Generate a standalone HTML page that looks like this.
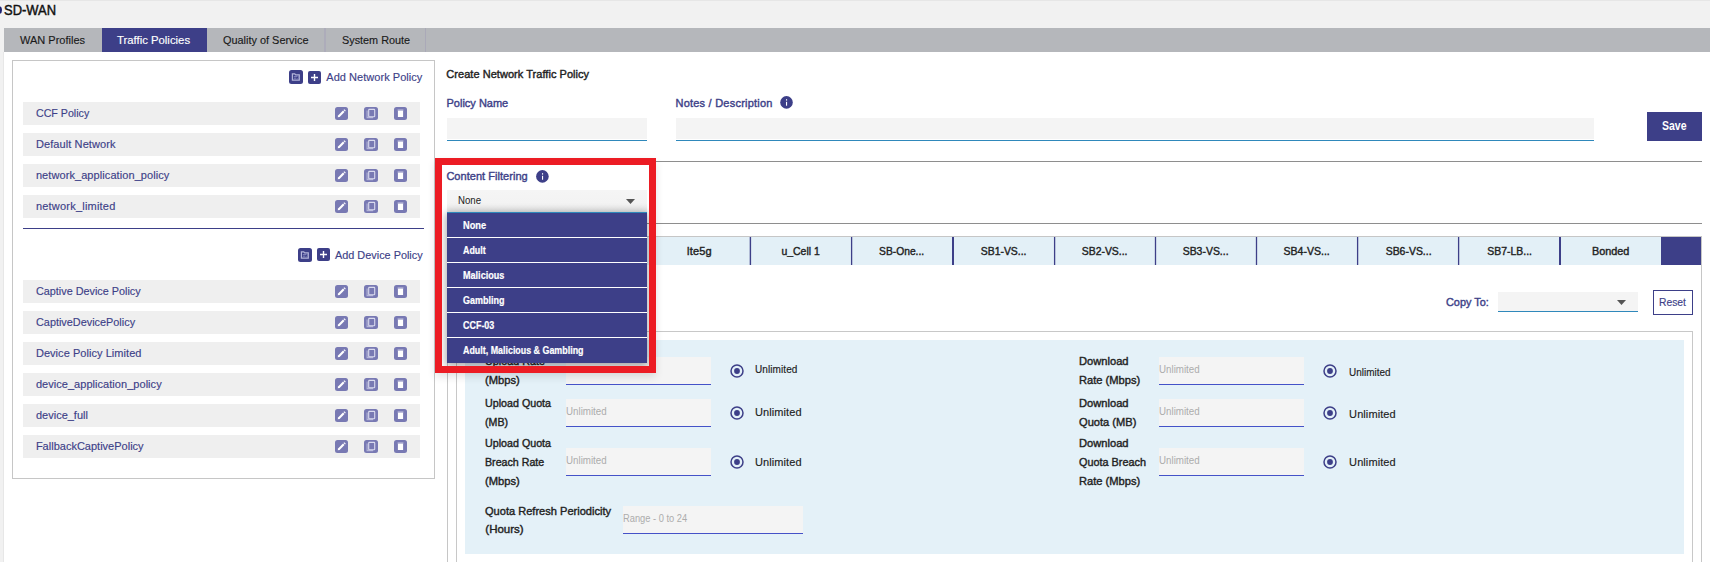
<!DOCTYPE html>
<html><head><meta charset="utf-8"><style>
html,body{margin:0;padding:0;width:1710px;height:562px;overflow:hidden;background:#fff}
body{position:relative;font-family:"Liberation Sans",sans-serif}
.t{position:absolute;white-space:nowrap}
.r{position:absolute}
svg.r{display:block}
</style></head><body>
<div class="r" style="left:0px;top:0px;width:1710px;height:562px;background:#f1f1f1"></div>
<div class="r" style="left:0px;top:0px;width:1710px;height:1px;background:#e6e6e6"></div>
<div class="r" style="left:4px;top:28px;width:1706px;height:24px;background:#b5b7bb"></div>
<div class="r" style="left:4px;top:52px;width:1706px;height:510px;background:#fff"></div>
<div class="r" style="left:3px;top:52px;width:1px;height:510px;background:#e7e7e7"></div>
<div class="r" style="left:-5px;top:6px;width:6.5px;height:8px;background:#1d2170;border-radius:50%"></div>
<div class="t" style="left:3.70px;transform:scaleX(0.9250);transform-origin:left center;top:3.00px;font-size:14px;line-height:14px;font-weight:400;color:#111;letter-spacing:0.000px;-webkit-text-stroke:0.45px #111;">SD-WAN</div>
<div class="r" style="left:102px;top:28px;width:105px;height:24px;background:#3d3f88"></div>
<div class="r" style="left:324px;top:28px;width:2px;height:24px;background:#adacba"></div>
<div class="r" style="left:425px;top:28px;width:1px;height:24px;background:#aaa9b8"></div>
<div class="t" style="left:19.50px;transform:scaleX(0.9329);transform-origin:left center;top:35.00px;font-size:11.8px;line-height:11.8px;font-weight:400;color:#1a1a1a;letter-spacing:0.000px;-webkit-text-stroke:0.15px #1a1a1a;">WAN Profiles</div>
<div class="t" style="left:117.30px;transform:scaleX(0.9605);transform-origin:left center;top:35.00px;font-size:11.8px;line-height:11.8px;font-weight:400;color:#fff;letter-spacing:0.000px;-webkit-text-stroke:0.15px #fff;">Traffic Policies</div>
<div class="t" style="left:222.50px;transform:scaleX(0.9247);transform-origin:left center;top:35.00px;font-size:11.8px;line-height:11.8px;font-weight:400;color:#1a1a1a;letter-spacing:0.000px;-webkit-text-stroke:0.15px #1a1a1a;">Quality of Service</div>
<div class="t" style="left:341.50px;transform:scaleX(0.9189);transform-origin:left center;top:35.00px;font-size:11.8px;line-height:11.8px;font-weight:400;color:#1a1a1a;letter-spacing:0.000px;-webkit-text-stroke:0.15px #1a1a1a;">System Route</div>
<div class="r" style="left:12px;top:60px;width:423px;height:419px;border:1px solid #c6c6c6;box-sizing:border-box"></div>
<svg class="r" style="left:289px;top:70px" width="14" height="14" viewBox="0 0 14 14"><rect x="0" y="0" width="14" height="14" rx="2.5" fill="#3d3f88"/><path d="M3.4 3.9h2.4l0.9 0.9h3.6v5.3H3.4z" fill="none" stroke="#b4b5da" stroke-width="1.2"/><path d="M4.8 6.6h3.4M4.8 8.2h2.6" stroke="#8d8fc4" stroke-width="0.9"/><path d="M8.6 5.8l1.2 1.6-1.2 1.6" fill="none" stroke="#8d8fc4" stroke-width="0.8"/></svg>
<svg class="r" style="left:308px;top:71px" width="13" height="13" viewBox="0 0 13 13"><rect x="0" y="0" width="13" height="13" rx="2" fill="#3d3f88"/><path d="M6.5 3v7M3 6.5h7" stroke="#fff" stroke-width="1.4"/></svg>
<div class="t" style="left:326.30px;top:72.00px;font-size:11px;line-height:11px;font-weight:400;color:#3d3f88;letter-spacing:0.041px;-webkit-text-stroke:0.15px #3d3f88;">Add Network Policy</div>
<div class="r" style="left:23px;top:102px;width:397px;height:23px;background:#efefef"></div>
<div class="t" style="left:35.90px;transform:scaleX(0.9673);transform-origin:left center;top:108.00px;font-size:11px;line-height:11px;font-weight:400;color:#3d3f88;letter-spacing:0.000px;-webkit-text-stroke:0.15px #3d3f88;">CCF Policy</div>
<svg class="r" style="left:335px;top:107px" width="13" height="13" viewBox="0 0 13 13"><rect x="0" y="0" width="13" height="13" rx="2.5" fill="#7879b3"/><path d="M2.7 10.3l0.4-1.9 4.9-4.9 1.5 1.5-4.9 4.9z" fill="#fff"/><path d="M8.5 3l0.8-0.8 1.5 1.5-0.8 0.8z" fill="#fff"/></svg>
<svg class="r" style="left:364px;top:107px" width="14" height="13" viewBox="0 0 14 13"><rect x="0" y="0" width="14" height="13" rx="2.5" fill="#7879b3"/><path d="M3.1 3.6v7h6" fill="none" stroke="#b3b4d8" stroke-width="1.1"/><rect x="4.7" y="2.4" width="6" height="7.4" rx="0.6" fill="#7879b3" stroke="#d9daee" stroke-width="1.1"/></svg>
<svg class="r" style="left:394px;top:107px" width="13" height="13" viewBox="0 0 13 13"><rect x="0" y="0" width="13" height="13" rx="2.5" fill="#7879b3"/><rect x="3.9" y="3.6" width="5.2" height="6.4" fill="#fff"/><rect x="3.6" y="2.6" width="5.8" height="0.8" fill="#dcdcee"/></svg>
<div class="r" style="left:23px;top:133px;width:397px;height:23px;background:#efefef"></div>
<div class="t" style="left:35.90px;top:139.00px;font-size:11px;line-height:11px;font-weight:400;color:#3d3f88;letter-spacing:0.100px;-webkit-text-stroke:0.15px #3d3f88;">Default Network</div>
<svg class="r" style="left:335px;top:138px" width="13" height="13" viewBox="0 0 13 13"><rect x="0" y="0" width="13" height="13" rx="2.5" fill="#7879b3"/><path d="M2.7 10.3l0.4-1.9 4.9-4.9 1.5 1.5-4.9 4.9z" fill="#fff"/><path d="M8.5 3l0.8-0.8 1.5 1.5-0.8 0.8z" fill="#fff"/></svg>
<svg class="r" style="left:364px;top:138px" width="14" height="13" viewBox="0 0 14 13"><rect x="0" y="0" width="14" height="13" rx="2.5" fill="#7879b3"/><path d="M3.1 3.6v7h6" fill="none" stroke="#b3b4d8" stroke-width="1.1"/><rect x="4.7" y="2.4" width="6" height="7.4" rx="0.6" fill="#7879b3" stroke="#d9daee" stroke-width="1.1"/></svg>
<svg class="r" style="left:394px;top:138px" width="13" height="13" viewBox="0 0 13 13"><rect x="0" y="0" width="13" height="13" rx="2.5" fill="#7879b3"/><rect x="3.9" y="3.6" width="5.2" height="6.4" fill="#fff"/><rect x="3.6" y="2.6" width="5.8" height="0.8" fill="#dcdcee"/></svg>
<div class="r" style="left:23px;top:164px;width:397px;height:23px;background:#efefef"></div>
<div class="t" style="left:35.90px;top:170.00px;font-size:11px;line-height:11px;font-weight:400;color:#3d3f88;letter-spacing:0.080px;-webkit-text-stroke:0.15px #3d3f88;">network_application_policy</div>
<svg class="r" style="left:335px;top:169px" width="13" height="13" viewBox="0 0 13 13"><rect x="0" y="0" width="13" height="13" rx="2.5" fill="#7879b3"/><path d="M2.7 10.3l0.4-1.9 4.9-4.9 1.5 1.5-4.9 4.9z" fill="#fff"/><path d="M8.5 3l0.8-0.8 1.5 1.5-0.8 0.8z" fill="#fff"/></svg>
<svg class="r" style="left:364px;top:169px" width="14" height="13" viewBox="0 0 14 13"><rect x="0" y="0" width="14" height="13" rx="2.5" fill="#7879b3"/><path d="M3.1 3.6v7h6" fill="none" stroke="#b3b4d8" stroke-width="1.1"/><rect x="4.7" y="2.4" width="6" height="7.4" rx="0.6" fill="#7879b3" stroke="#d9daee" stroke-width="1.1"/></svg>
<svg class="r" style="left:394px;top:169px" width="13" height="13" viewBox="0 0 13 13"><rect x="0" y="0" width="13" height="13" rx="2.5" fill="#7879b3"/><rect x="3.9" y="3.6" width="5.2" height="6.4" fill="#fff"/><rect x="3.6" y="2.6" width="5.8" height="0.8" fill="#dcdcee"/></svg>
<div class="r" style="left:23px;top:195px;width:397px;height:23px;background:#efefef"></div>
<div class="t" style="left:35.90px;top:201.00px;font-size:11px;line-height:11px;font-weight:400;color:#3d3f88;letter-spacing:0.214px;-webkit-text-stroke:0.15px #3d3f88;">network_limited</div>
<svg class="r" style="left:335px;top:200px" width="13" height="13" viewBox="0 0 13 13"><rect x="0" y="0" width="13" height="13" rx="2.5" fill="#7879b3"/><path d="M2.7 10.3l0.4-1.9 4.9-4.9 1.5 1.5-4.9 4.9z" fill="#fff"/><path d="M8.5 3l0.8-0.8 1.5 1.5-0.8 0.8z" fill="#fff"/></svg>
<svg class="r" style="left:364px;top:200px" width="14" height="13" viewBox="0 0 14 13"><rect x="0" y="0" width="14" height="13" rx="2.5" fill="#7879b3"/><path d="M3.1 3.6v7h6" fill="none" stroke="#b3b4d8" stroke-width="1.1"/><rect x="4.7" y="2.4" width="6" height="7.4" rx="0.6" fill="#7879b3" stroke="#d9daee" stroke-width="1.1"/></svg>
<svg class="r" style="left:394px;top:200px" width="13" height="13" viewBox="0 0 13 13"><rect x="0" y="0" width="13" height="13" rx="2.5" fill="#7879b3"/><rect x="3.9" y="3.6" width="5.2" height="6.4" fill="#fff"/><rect x="3.6" y="2.6" width="5.8" height="0.8" fill="#dcdcee"/></svg>
<div class="r" style="left:23px;top:228px;width:401px;height:1px;background:#3d3f88"></div>
<svg class="r" style="left:298px;top:248px" width="14" height="14" viewBox="0 0 14 14"><rect x="0" y="0" width="14" height="14" rx="2.5" fill="#3d3f88"/><path d="M3.4 3.9h2.4l0.9 0.9h3.6v5.3H3.4z" fill="none" stroke="#b4b5da" stroke-width="1.2"/><path d="M4.8 6.6h3.4M4.8 8.2h2.6" stroke="#8d8fc4" stroke-width="0.9"/><path d="M8.6 5.8l1.2 1.6-1.2 1.6" fill="none" stroke="#8d8fc4" stroke-width="0.8"/></svg>
<svg class="r" style="left:317px;top:248px" width="13" height="13" viewBox="0 0 13 13"><rect x="0" y="0" width="13" height="13" rx="2" fill="#3d3f88"/><path d="M6.5 3v7M3 6.5h7" stroke="#fff" stroke-width="1.4"/></svg>
<div class="t" style="left:334.90px;transform:scaleX(0.9888);transform-origin:left center;top:250.00px;font-size:11px;line-height:11px;font-weight:400;color:#3d3f88;letter-spacing:0.000px;-webkit-text-stroke:0.15px #3d3f88;">Add Device Policy</div>
<div class="r" style="left:23px;top:280px;width:397px;height:23px;background:#efefef"></div>
<div class="t" style="left:35.90px;transform:scaleX(0.9841);transform-origin:left center;top:286.00px;font-size:11px;line-height:11px;font-weight:400;color:#3d3f88;letter-spacing:0.000px;-webkit-text-stroke:0.15px #3d3f88;">Captive Device Policy</div>
<svg class="r" style="left:335px;top:285px" width="13" height="13" viewBox="0 0 13 13"><rect x="0" y="0" width="13" height="13" rx="2.5" fill="#7879b3"/><path d="M2.7 10.3l0.4-1.9 4.9-4.9 1.5 1.5-4.9 4.9z" fill="#fff"/><path d="M8.5 3l0.8-0.8 1.5 1.5-0.8 0.8z" fill="#fff"/></svg>
<svg class="r" style="left:364px;top:285px" width="14" height="13" viewBox="0 0 14 13"><rect x="0" y="0" width="14" height="13" rx="2.5" fill="#7879b3"/><path d="M3.1 3.6v7h6" fill="none" stroke="#b3b4d8" stroke-width="1.1"/><rect x="4.7" y="2.4" width="6" height="7.4" rx="0.6" fill="#7879b3" stroke="#d9daee" stroke-width="1.1"/></svg>
<svg class="r" style="left:394px;top:285px" width="13" height="13" viewBox="0 0 13 13"><rect x="0" y="0" width="13" height="13" rx="2.5" fill="#7879b3"/><rect x="3.9" y="3.6" width="5.2" height="6.4" fill="#fff"/><rect x="3.6" y="2.6" width="5.8" height="0.8" fill="#dcdcee"/></svg>
<div class="r" style="left:23px;top:311px;width:397px;height:23px;background:#efefef"></div>
<div class="t" style="left:35.90px;transform:scaleX(0.9881);transform-origin:left center;top:317.00px;font-size:11px;line-height:11px;font-weight:400;color:#3d3f88;letter-spacing:0.000px;-webkit-text-stroke:0.15px #3d3f88;">CaptiveDevicePolicy</div>
<svg class="r" style="left:335px;top:316px" width="13" height="13" viewBox="0 0 13 13"><rect x="0" y="0" width="13" height="13" rx="2.5" fill="#7879b3"/><path d="M2.7 10.3l0.4-1.9 4.9-4.9 1.5 1.5-4.9 4.9z" fill="#fff"/><path d="M8.5 3l0.8-0.8 1.5 1.5-0.8 0.8z" fill="#fff"/></svg>
<svg class="r" style="left:364px;top:316px" width="14" height="13" viewBox="0 0 14 13"><rect x="0" y="0" width="14" height="13" rx="2.5" fill="#7879b3"/><path d="M3.1 3.6v7h6" fill="none" stroke="#b3b4d8" stroke-width="1.1"/><rect x="4.7" y="2.4" width="6" height="7.4" rx="0.6" fill="#7879b3" stroke="#d9daee" stroke-width="1.1"/></svg>
<svg class="r" style="left:394px;top:316px" width="13" height="13" viewBox="0 0 13 13"><rect x="0" y="0" width="13" height="13" rx="2.5" fill="#7879b3"/><rect x="3.9" y="3.6" width="5.2" height="6.4" fill="#fff"/><rect x="3.6" y="2.6" width="5.8" height="0.8" fill="#dcdcee"/></svg>
<div class="r" style="left:23px;top:342px;width:397px;height:23px;background:#efefef"></div>
<div class="t" style="left:35.90px;top:348.00px;font-size:11px;line-height:11px;font-weight:400;color:#3d3f88;letter-spacing:0.050px;-webkit-text-stroke:0.15px #3d3f88;">Device Policy Limited</div>
<svg class="r" style="left:335px;top:347px" width="13" height="13" viewBox="0 0 13 13"><rect x="0" y="0" width="13" height="13" rx="2.5" fill="#7879b3"/><path d="M2.7 10.3l0.4-1.9 4.9-4.9 1.5 1.5-4.9 4.9z" fill="#fff"/><path d="M8.5 3l0.8-0.8 1.5 1.5-0.8 0.8z" fill="#fff"/></svg>
<svg class="r" style="left:364px;top:347px" width="14" height="13" viewBox="0 0 14 13"><rect x="0" y="0" width="14" height="13" rx="2.5" fill="#7879b3"/><path d="M3.1 3.6v7h6" fill="none" stroke="#b3b4d8" stroke-width="1.1"/><rect x="4.7" y="2.4" width="6" height="7.4" rx="0.6" fill="#7879b3" stroke="#d9daee" stroke-width="1.1"/></svg>
<svg class="r" style="left:394px;top:347px" width="13" height="13" viewBox="0 0 13 13"><rect x="0" y="0" width="13" height="13" rx="2.5" fill="#7879b3"/><rect x="3.9" y="3.6" width="5.2" height="6.4" fill="#fff"/><rect x="3.6" y="2.6" width="5.8" height="0.8" fill="#dcdcee"/></svg>
<div class="r" style="left:23px;top:373px;width:397px;height:23px;background:#efefef"></div>
<div class="t" style="left:35.90px;top:379.00px;font-size:11px;line-height:11px;font-weight:400;color:#3d3f88;letter-spacing:0.042px;-webkit-text-stroke:0.15px #3d3f88;">device_application_policy</div>
<svg class="r" style="left:335px;top:378px" width="13" height="13" viewBox="0 0 13 13"><rect x="0" y="0" width="13" height="13" rx="2.5" fill="#7879b3"/><path d="M2.7 10.3l0.4-1.9 4.9-4.9 1.5 1.5-4.9 4.9z" fill="#fff"/><path d="M8.5 3l0.8-0.8 1.5 1.5-0.8 0.8z" fill="#fff"/></svg>
<svg class="r" style="left:364px;top:378px" width="14" height="13" viewBox="0 0 14 13"><rect x="0" y="0" width="14" height="13" rx="2.5" fill="#7879b3"/><path d="M3.1 3.6v7h6" fill="none" stroke="#b3b4d8" stroke-width="1.1"/><rect x="4.7" y="2.4" width="6" height="7.4" rx="0.6" fill="#7879b3" stroke="#d9daee" stroke-width="1.1"/></svg>
<svg class="r" style="left:394px;top:378px" width="13" height="13" viewBox="0 0 13 13"><rect x="0" y="0" width="13" height="13" rx="2.5" fill="#7879b3"/><rect x="3.9" y="3.6" width="5.2" height="6.4" fill="#fff"/><rect x="3.6" y="2.6" width="5.8" height="0.8" fill="#dcdcee"/></svg>
<div class="r" style="left:23px;top:404px;width:397px;height:23px;background:#efefef"></div>
<div class="t" style="left:35.90px;transform:scaleX(0.9981);transform-origin:left center;top:410.00px;font-size:11px;line-height:11px;font-weight:400;color:#3d3f88;letter-spacing:0.000px;-webkit-text-stroke:0.15px #3d3f88;">device_full</div>
<svg class="r" style="left:335px;top:409px" width="13" height="13" viewBox="0 0 13 13"><rect x="0" y="0" width="13" height="13" rx="2.5" fill="#7879b3"/><path d="M2.7 10.3l0.4-1.9 4.9-4.9 1.5 1.5-4.9 4.9z" fill="#fff"/><path d="M8.5 3l0.8-0.8 1.5 1.5-0.8 0.8z" fill="#fff"/></svg>
<svg class="r" style="left:364px;top:409px" width="14" height="13" viewBox="0 0 14 13"><rect x="0" y="0" width="14" height="13" rx="2.5" fill="#7879b3"/><path d="M3.1 3.6v7h6" fill="none" stroke="#b3b4d8" stroke-width="1.1"/><rect x="4.7" y="2.4" width="6" height="7.4" rx="0.6" fill="#7879b3" stroke="#d9daee" stroke-width="1.1"/></svg>
<svg class="r" style="left:394px;top:409px" width="13" height="13" viewBox="0 0 13 13"><rect x="0" y="0" width="13" height="13" rx="2.5" fill="#7879b3"/><rect x="3.9" y="3.6" width="5.2" height="6.4" fill="#fff"/><rect x="3.6" y="2.6" width="5.8" height="0.8" fill="#dcdcee"/></svg>
<div class="r" style="left:23px;top:435px;width:397px;height:23px;background:#efefef"></div>
<div class="t" style="left:35.90px;top:441.00px;font-size:11px;line-height:11px;font-weight:400;color:#3d3f88;letter-spacing:0.005px;-webkit-text-stroke:0.15px #3d3f88;">FallbackCaptivePolicy</div>
<svg class="r" style="left:335px;top:440px" width="13" height="13" viewBox="0 0 13 13"><rect x="0" y="0" width="13" height="13" rx="2.5" fill="#7879b3"/><path d="M2.7 10.3l0.4-1.9 4.9-4.9 1.5 1.5-4.9 4.9z" fill="#fff"/><path d="M8.5 3l0.8-0.8 1.5 1.5-0.8 0.8z" fill="#fff"/></svg>
<svg class="r" style="left:364px;top:440px" width="14" height="13" viewBox="0 0 14 13"><rect x="0" y="0" width="14" height="13" rx="2.5" fill="#7879b3"/><path d="M3.1 3.6v7h6" fill="none" stroke="#b3b4d8" stroke-width="1.1"/><rect x="4.7" y="2.4" width="6" height="7.4" rx="0.6" fill="#7879b3" stroke="#d9daee" stroke-width="1.1"/></svg>
<svg class="r" style="left:394px;top:440px" width="13" height="13" viewBox="0 0 13 13"><rect x="0" y="0" width="13" height="13" rx="2.5" fill="#7879b3"/><rect x="3.9" y="3.6" width="5.2" height="6.4" fill="#fff"/><rect x="3.6" y="2.6" width="5.8" height="0.8" fill="#dcdcee"/></svg>
<div class="t" style="left:446.30px;top:69.00px;font-size:11px;line-height:11px;font-weight:400;color:#222;letter-spacing:0.043px;-webkit-text-stroke:0.4px #222;">Create Network Traffic Policy</div>
<div class="t" style="left:446.50px;top:98.00px;font-size:11px;line-height:11px;font-weight:400;color:#3d3f88;letter-spacing:0.000px;-webkit-text-stroke:0.4px #3d3f88;">Policy Name</div>
<div class="r" style="left:447px;top:118px;width:200px;height:21px;background:#f4f4f4"></div>
<div class="r" style="left:447px;top:140px;width:200px;height:1px;background:#2f88bb"></div>
<div class="t" style="left:675.50px;top:98.00px;font-size:11px;line-height:11px;font-weight:400;color:#3d3f88;letter-spacing:0.222px;-webkit-text-stroke:0.4px #3d3f88;">Notes / Description</div>
<svg class="r" style="left:779px;top:95px" width="15" height="15" viewBox="0 0 15 15"><circle cx="7.5" cy="7.400000000000006" r="6.3" fill="#3d3f88"/><rect x="7" y="6.800000000000006" width="1.1" height="3.9" fill="#fff"/><rect x="7" y="4.2000000000000055" width="1.1" height="1.4" fill="#fff"/></svg>
<div class="r" style="left:676px;top:118px;width:918px;height:21px;background:#f4f4f4"></div>
<div class="r" style="left:676px;top:140px;width:918px;height:1px;background:#2f88bb"></div>
<div class="r" style="left:1647px;top:112px;width:55px;height:29px;background:#3d3f88"></div>
<div class="t" style="left:1661.90px;transform:scaleX(0.8750);transform-origin:left center;top:120.00px;font-size:12px;line-height:12px;font-weight:700;color:#fff;letter-spacing:0.000px;">Save</div>
<div class="r" style="left:447px;top:161px;width:1255px;height:1px;background:#8e8e8e"></div>
<div class="r" style="left:447px;top:223px;width:1255px;height:1px;background:#8e8e8e"></div>
<div class="r" style="left:447px;top:236px;width:1255px;height:400px;border:1px solid #c6c6c6;box-sizing:border-box"></div>
<div class="r" style="left:448px;top:237px;width:1253px;height:28px;background:#e3f0f7"></div>
<div class="t" style="left:648.75px;width:101.25px;text-align:center;text-indent:0.225px;top:246.00px;font-size:11px;line-height:11px;font-weight:400;color:#222;letter-spacing:0.225px;-webkit-text-stroke:0.4px #222;">lte5g</div>
<div class="t" style="left:750.00px;width:101.25px;text-align:center;text-indent:0.000px;transform:scaleX(0.9500);transform-origin:center center;top:246.00px;font-size:11px;line-height:11px;font-weight:400;color:#222;letter-spacing:0.000px;-webkit-text-stroke:0.4px #222;">u_Cell 1</div>
<div class="t" style="left:851.25px;width:101.25px;text-align:center;text-indent:0.000px;transform:scaleX(0.9333);transform-origin:center center;top:246.00px;font-size:11px;line-height:11px;font-weight:400;color:#222;letter-spacing:0.000px;-webkit-text-stroke:0.4px #222;">SB-One...</div>
<div class="t" style="left:952.50px;width:101.25px;text-align:center;text-indent:0.000px;transform:scaleX(0.9479);transform-origin:center center;top:246.00px;font-size:11px;line-height:11px;font-weight:400;color:#222;letter-spacing:0.000px;-webkit-text-stroke:0.4px #222;">SB1-VS...</div>
<div class="t" style="left:1053.75px;width:101.25px;text-align:center;text-indent:0.000px;transform:scaleX(0.9479);transform-origin:center center;top:246.00px;font-size:11px;line-height:11px;font-weight:400;color:#222;letter-spacing:0.000px;-webkit-text-stroke:0.4px #222;">SB2-VS...</div>
<div class="t" style="left:1155.00px;width:101.25px;text-align:center;text-indent:0.000px;transform:scaleX(0.9500);transform-origin:center center;top:246.00px;font-size:11px;line-height:11px;font-weight:400;color:#222;letter-spacing:0.000px;-webkit-text-stroke:0.4px #222;">SB3-VS...</div>
<div class="t" style="left:1256.25px;width:101.25px;text-align:center;text-indent:0.000px;transform:scaleX(0.9583);transform-origin:center center;top:246.00px;font-size:11px;line-height:11px;font-weight:400;color:#222;letter-spacing:0.000px;-webkit-text-stroke:0.4px #222;">SB4-VS...</div>
<div class="t" style="left:1357.50px;width:101.25px;text-align:center;text-indent:0.000px;transform:scaleX(0.9500);transform-origin:center center;top:246.00px;font-size:11px;line-height:11px;font-weight:400;color:#222;letter-spacing:0.000px;-webkit-text-stroke:0.4px #222;">SB6-VS...</div>
<div class="t" style="left:1458.75px;width:101.25px;text-align:center;text-indent:0.000px;transform:scaleX(0.9489);transform-origin:center center;top:246.00px;font-size:11px;line-height:11px;font-weight:400;color:#222;letter-spacing:0.000px;-webkit-text-stroke:0.4px #222;">SB7-LB...</div>
<div class="t" style="left:1560.00px;width:101.25px;text-align:center;text-indent:0.000px;transform:scaleX(0.9868);transform-origin:center center;top:246.00px;font-size:11px;line-height:11px;font-weight:400;color:#222;letter-spacing:0.000px;-webkit-text-stroke:0.4px #222;">Bonded</div>
<svg class="r" style="left:448px;top:237px" width="1253" height="28" viewBox="0 0 1253 28"><rect x="301.70" y="0" width="1.4" height="28" fill="#3d3f88"/><rect x="402.95" y="0" width="1.3" height="28" fill="#3d3f88"/><rect x="504.00" y="0" width="2" height="28" fill="#3d3f88"/><rect x="605.95" y="0" width="1.3" height="28" fill="#3d3f88"/><rect x="706.85" y="0" width="1.3" height="28" fill="#3d3f88"/><rect x="807.85" y="0" width="1.3" height="28" fill="#3d3f88"/><rect x="908.95" y="0" width="1.3" height="28" fill="#3d3f88"/><rect x="1009.95" y="0" width="1.3" height="28" fill="#3d3f88"/><rect x="1111.00" y="0" width="2" height="28" fill="#3d3f88"/><rect x="1213" y="0" width="40" height="28" fill="#3d3f88"/></svg>
<div class="t" style="left:1445.50px;transform:scaleX(0.9907);transform-origin:left center;top:297.00px;font-size:11px;line-height:11px;font-weight:400;color:#3d3f88;letter-spacing:0.000px;-webkit-text-stroke:0.4px #3d3f88;">Copy To:</div>
<div class="r" style="left:1498px;top:292px;width:140px;height:19px;background:#f4f4f4"></div>
<div class="r" style="left:1498px;top:311px;width:140px;height:1px;background:#2f88bb"></div>
<svg class="r" style="left:1617px;top:300px" width="9" height="5" viewBox="0 0 9 5"><path d="M0 0h9L4.5 5z" fill="#555"/></svg>
<div class="r" style="left:1653px;top:290px;width:40px;height:25px;border:1px solid #3d3f88;box-sizing:border-box;background:#fff"></div>
<div class="t" style="left:1659.00px;transform:scaleX(0.9379);transform-origin:left center;top:297.00px;font-size:11px;line-height:11px;font-weight:400;color:#3d3f88;letter-spacing:0.000px;-webkit-text-stroke:0.15px #3d3f88;">Reset</div>
<div class="r" style="left:456px;top:331px;width:1237px;height:300px;border:1px solid #c8c8c8;box-sizing:border-box"></div>
<div class="r" style="left:465px;top:340px;width:1219px;height:214px;background:#e4f1f8"></div>
<div class="t" style="left:485.30px;transform:scaleX(0.9375);transform-origin:left center;top:356.00px;font-size:11.5px;line-height:11.5px;font-weight:400;color:#222;letter-spacing:0.000px;-webkit-text-stroke:0.4px #222;">Upload Rate</div>
<div class="t" style="left:485.30px;transform:scaleX(0.9722);transform-origin:left center;top:375.00px;font-size:11.5px;line-height:11.5px;font-weight:400;color:#222;letter-spacing:0.000px;-webkit-text-stroke:0.4px #222;">(Mbps)</div>
<div class="r" style="left:566px;top:357px;width:145px;height:27px;background:#f4f4f4"></div>
<div class="r" style="left:566px;top:384px;width:145px;height:1px;background:#4552c8"></div>
<svg class="r" style="left:730px;top:364px" width="14" height="14" viewBox="0 0 14 14"><circle cx="7" cy="7" r="6" fill="none" stroke="#3d3f88" stroke-width="1.5"/><circle cx="7" cy="7" r="2.9" fill="#3d3f88"/></svg>
<div class="t" style="left:755.00px;top:365.00px;font-size:10px;line-height:10px;font-weight:400;color:#222;letter-spacing:0.088px;-webkit-text-stroke:0.15px #222;">Unlimited</div>
<div class="t" style="left:485.30px;transform:scaleX(0.9306);transform-origin:left center;top:398.00px;font-size:11.5px;line-height:11.5px;font-weight:400;color:#222;letter-spacing:0.000px;-webkit-text-stroke:0.4px #222;">Upload Quota</div>
<div class="t" style="left:485.30px;transform:scaleX(0.9240);transform-origin:left center;top:417.00px;font-size:11.5px;line-height:11.5px;font-weight:400;color:#222;letter-spacing:0.000px;-webkit-text-stroke:0.4px #222;">(MB)</div>
<div class="r" style="left:566px;top:399px;width:145px;height:27px;background:#f4f4f4"></div>
<div class="r" style="left:566px;top:426px;width:145px;height:1px;background:#4552c8"></div>
<div class="t" style="left:565.50px;transform:scaleX(0.9756);transform-origin:left center;top:407.00px;font-size:10px;line-height:10px;font-weight:400;color:#acacac;letter-spacing:0.000px;">Unlimited</div>
<svg class="r" style="left:730px;top:406px" width="14" height="14" viewBox="0 0 14 14"><circle cx="7" cy="7" r="6" fill="none" stroke="#3d3f88" stroke-width="1.5"/><circle cx="7" cy="7" r="2.9" fill="#3d3f88"/></svg>
<div class="t" style="left:755.00px;top:407.00px;font-size:11px;line-height:11px;font-weight:400;color:#222;letter-spacing:0.088px;-webkit-text-stroke:0.15px #222;">Unlimited</div>
<div class="t" style="left:485.30px;transform:scaleX(0.9306);transform-origin:left center;top:438.00px;font-size:11.5px;line-height:11.5px;font-weight:400;color:#222;letter-spacing:0.000px;-webkit-text-stroke:0.4px #222;">Upload Quota</div>
<div class="t" style="left:485.30px;transform:scaleX(0.9266);transform-origin:left center;top:457.00px;font-size:11.5px;line-height:11.5px;font-weight:400;color:#222;letter-spacing:0.000px;-webkit-text-stroke:0.4px #222;">Breach Rate</div>
<div class="t" style="left:485.30px;transform:scaleX(0.9722);transform-origin:left center;top:476.00px;font-size:11.5px;line-height:11.5px;font-weight:400;color:#222;letter-spacing:0.000px;-webkit-text-stroke:0.4px #222;">(Mbps)</div>
<div class="r" style="left:566px;top:448px;width:145px;height:27px;background:#f4f4f4"></div>
<div class="r" style="left:566px;top:475px;width:145px;height:1px;background:#4552c8"></div>
<div class="t" style="left:565.50px;transform:scaleX(0.9756);transform-origin:left center;top:456.00px;font-size:10px;line-height:10px;font-weight:400;color:#acacac;letter-spacing:0.000px;">Unlimited</div>
<svg class="r" style="left:730px;top:455px" width="14" height="14" viewBox="0 0 14 14"><circle cx="7" cy="7" r="6" fill="none" stroke="#3d3f88" stroke-width="1.5"/><circle cx="7" cy="7" r="2.9" fill="#3d3f88"/></svg>
<div class="t" style="left:755.00px;top:457.00px;font-size:11px;line-height:11px;font-weight:400;color:#222;letter-spacing:0.088px;-webkit-text-stroke:0.15px #222;">Unlimited</div>
<div class="t" style="left:485.30px;transform:scaleX(0.9618);transform-origin:left center;top:506.00px;font-size:11.5px;line-height:11.5px;font-weight:400;color:#222;letter-spacing:0.000px;-webkit-text-stroke:0.4px #222;">Quota Refresh Periodicity</div>
<div class="t" style="left:485.30px;top:524.00px;font-size:11.5px;line-height:11.5px;font-weight:400;color:#222;letter-spacing:0.000px;-webkit-text-stroke:0.4px #222;">(Hours)</div>
<div class="r" style="left:623px;top:506px;width:180px;height:27px;background:#f4f4f4"></div>
<div class="r" style="left:623px;top:533px;width:180px;height:1px;background:#4552c8"></div>
<div class="t" style="left:622.50px;transform:scaleX(0.9309);transform-origin:left center;top:514.00px;font-size:10px;line-height:10px;font-weight:400;color:#acacac;letter-spacing:0.000px;">Range - 0 to 24</div>
<div class="t" style="left:1078.80px;transform:scaleX(0.9686);transform-origin:left center;top:356.00px;font-size:11.5px;line-height:11.5px;font-weight:400;color:#222;letter-spacing:0.000px;-webkit-text-stroke:0.4px #222;">Download</div>
<div class="t" style="left:1078.80px;transform:scaleX(0.9683);transform-origin:left center;top:375.00px;font-size:11.5px;line-height:11.5px;font-weight:400;color:#222;letter-spacing:0.000px;-webkit-text-stroke:0.4px #222;">Rate (Mbps)</div>
<div class="r" style="left:1159px;top:357px;width:145px;height:27px;background:#f4f4f4"></div>
<div class="r" style="left:1159px;top:384px;width:145px;height:1px;background:#4552c8"></div>
<div class="t" style="left:1158.50px;transform:scaleX(0.9756);transform-origin:left center;top:365.00px;font-size:10px;line-height:10px;font-weight:400;color:#acacac;letter-spacing:0.000px;">Unlimited</div>
<svg class="r" style="left:1322.5px;top:364px" width="14" height="14" viewBox="0 0 14 14"><circle cx="7" cy="7" r="6" fill="none" stroke="#3d3f88" stroke-width="1.5"/><circle cx="7" cy="7" r="2.9" fill="#3d3f88"/></svg>
<div class="t" style="left:1349.10px;transform:scaleX(0.9951);transform-origin:left center;top:368.00px;font-size:10px;line-height:10px;font-weight:400;color:#222;letter-spacing:0.000px;-webkit-text-stroke:0.15px #222;">Unlimited</div>
<div class="t" style="left:1078.80px;transform:scaleX(0.9686);transform-origin:left center;top:398.00px;font-size:11.5px;line-height:11.5px;font-weight:400;color:#222;letter-spacing:0.000px;-webkit-text-stroke:0.4px #222;">Download</div>
<div class="t" style="left:1078.80px;transform:scaleX(0.9661);transform-origin:left center;top:417.00px;font-size:11.5px;line-height:11.5px;font-weight:400;color:#222;letter-spacing:0.000px;-webkit-text-stroke:0.4px #222;">Quota (MB)</div>
<div class="r" style="left:1159px;top:399px;width:145px;height:27px;background:#f4f4f4"></div>
<div class="r" style="left:1159px;top:426px;width:145px;height:1px;background:#4552c8"></div>
<div class="t" style="left:1158.50px;transform:scaleX(0.9756);transform-origin:left center;top:407.00px;font-size:10px;line-height:10px;font-weight:400;color:#acacac;letter-spacing:0.000px;">Unlimited</div>
<svg class="r" style="left:1322.5px;top:406px" width="14" height="14" viewBox="0 0 14 14"><circle cx="7" cy="7" r="6" fill="none" stroke="#3d3f88" stroke-width="1.5"/><circle cx="7" cy="7" r="2.9" fill="#3d3f88"/></svg>
<div class="t" style="left:1349.10px;top:409.00px;font-size:11px;line-height:11px;font-weight:400;color:#222;letter-spacing:0.088px;-webkit-text-stroke:0.15px #222;">Unlimited</div>
<div class="t" style="left:1078.80px;transform:scaleX(0.9686);transform-origin:left center;top:438.00px;font-size:11.5px;line-height:11.5px;font-weight:400;color:#222;letter-spacing:0.000px;-webkit-text-stroke:0.4px #222;">Download</div>
<div class="t" style="left:1078.80px;transform:scaleX(0.9437);transform-origin:left center;top:457.00px;font-size:11.5px;line-height:11.5px;font-weight:400;color:#222;letter-spacing:0.000px;-webkit-text-stroke:0.4px #222;">Quota Breach</div>
<div class="t" style="left:1078.80px;transform:scaleX(0.9683);transform-origin:left center;top:476.00px;font-size:11.5px;line-height:11.5px;font-weight:400;color:#222;letter-spacing:0.000px;-webkit-text-stroke:0.4px #222;">Rate (Mbps)</div>
<div class="r" style="left:1159px;top:448px;width:145px;height:27px;background:#f4f4f4"></div>
<div class="r" style="left:1159px;top:475px;width:145px;height:1px;background:#4552c8"></div>
<div class="t" style="left:1158.50px;transform:scaleX(0.9756);transform-origin:left center;top:456.00px;font-size:10px;line-height:10px;font-weight:400;color:#acacac;letter-spacing:0.000px;">Unlimited</div>
<svg class="r" style="left:1322.5px;top:455px" width="14" height="14" viewBox="0 0 14 14"><circle cx="7" cy="7" r="6" fill="none" stroke="#3d3f88" stroke-width="1.5"/><circle cx="7" cy="7" r="2.9" fill="#3d3f88"/></svg>
<div class="t" style="left:1349.10px;top:457.00px;font-size:11px;line-height:11px;font-weight:400;color:#222;letter-spacing:0.088px;-webkit-text-stroke:0.15px #222;">Unlimited</div>
<div class="t" style="left:446.40px;top:171.00px;font-size:11px;line-height:11px;font-weight:400;color:#3d3f88;letter-spacing:0.037px;-webkit-text-stroke:0.4px #3d3f88;">Content Filtering</div>
<svg class="r" style="left:535px;top:169px" width="15" height="15" viewBox="0 0 15 15"><circle cx="7.399999999999977" cy="7.400000000000006" r="6.3" fill="#3d3f88"/><rect x="7" y="6.800000000000006" width="1.1" height="3.9" fill="#fff"/><rect x="7" y="4.2000000000000055" width="1.1" height="1.4" fill="#fff"/></svg>
<div class="r" style="left:447px;top:190px;width:200px;height:22px;background:linear-gradient(#f5f5f5 0%,#f3f3f3 60%,#e6e6e6 100%)"></div>
<div class="t" style="left:458.40px;transform:scaleX(0.9652);transform-origin:left center;top:196.00px;font-size:10px;line-height:10px;font-weight:400;color:#222;letter-spacing:0.000px;">None</div>
<svg class="r" style="left:626px;top:199px" width="9" height="5" viewBox="0 0 9 5"><path d="M0 0h9L4.5 5z" fill="#555"/></svg>
<div class="r" style="left:447px;top:212px;width:200px;height:151px;background:#3d3f88;box-shadow:0 2px 8px 1px rgba(0,0,0,0.35)"></div>
<div class="r" style="left:447px;top:212px;width:200px;height:1px;background:#2f88bb"></div>
<div class="t" style="left:462.90px;transform:scaleX(0.9240);transform-origin:left center;top:221.00px;font-size:10px;line-height:10px;font-weight:700;color:#fff;letter-spacing:0.000px;-webkit-text-stroke:0.2px #fff;">None</div>
<div class="r" style="left:447px;top:236.6px;width:200px;height:1.3px;background:#fff"></div>
<div class="t" style="left:462.90px;transform:scaleX(0.8885);transform-origin:left center;top:246.00px;font-size:10px;line-height:10px;font-weight:700;color:#fff;letter-spacing:0.000px;-webkit-text-stroke:0.2px #fff;">Adult</div>
<div class="r" style="left:447px;top:261.7px;width:200px;height:1.3px;background:#fff"></div>
<div class="t" style="left:462.90px;transform:scaleX(0.9065);transform-origin:left center;top:271.00px;font-size:10px;line-height:10px;font-weight:700;color:#fff;letter-spacing:0.000px;-webkit-text-stroke:0.2px #fff;">Malicious</div>
<div class="r" style="left:447px;top:286.8px;width:200px;height:1.3px;background:#fff"></div>
<div class="t" style="left:462.90px;transform:scaleX(0.8978);transform-origin:left center;top:296.00px;font-size:10px;line-height:10px;font-weight:700;color:#fff;letter-spacing:0.000px;-webkit-text-stroke:0.2px #fff;">Gambling</div>
<div class="r" style="left:447px;top:311.9px;width:200px;height:1.3px;background:#fff"></div>
<div class="t" style="left:462.90px;transform:scaleX(0.8943);transform-origin:left center;top:321.00px;font-size:10px;line-height:10px;font-weight:700;color:#fff;letter-spacing:0.000px;-webkit-text-stroke:0.2px #fff;">CCF-03</div>
<div class="r" style="left:447px;top:337.0px;width:200px;height:1.3px;background:#fff"></div>
<div class="t" style="left:462.90px;transform:scaleX(0.8889);transform-origin:left center;top:346.00px;font-size:10px;line-height:10px;font-weight:700;color:#fff;letter-spacing:0.000px;-webkit-text-stroke:0.2px #fff;">Adult, Malicious &amp; Gambling</div>
<div class="r" style="left:435px;top:158px;width:221px;height:215px;border:7px solid #ec1c24;box-sizing:border-box;box-shadow:0 4px 8px rgba(0,0,0,0.11)"></div>
</body></html>
